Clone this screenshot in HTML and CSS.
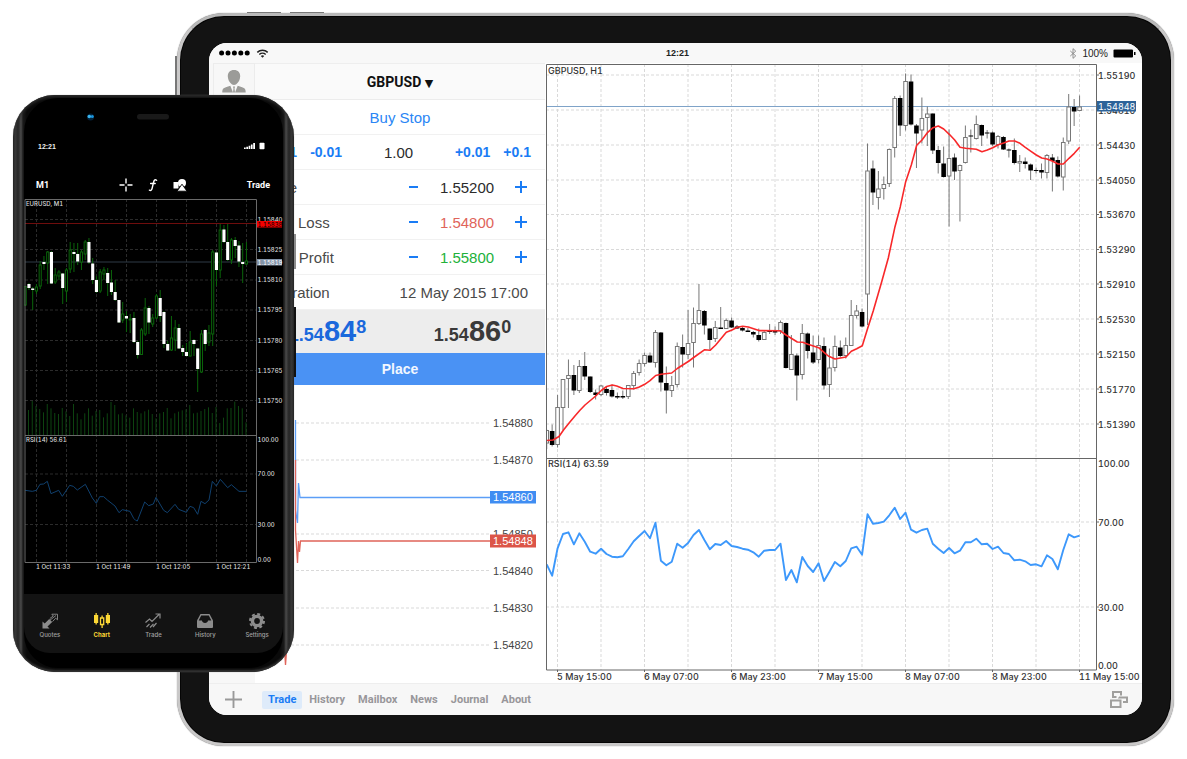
FILE: index.html
```html
<!DOCTYPE html>
<html lang="en">
<head>
<meta charset="utf-8">
<title>Trading terminal</title>
<link rel="stylesheet" href="styles.css">
</head>
<body>
<main class="stage">
  <section class="tablet">
    <i class="tablet-key tablet-key-a"></i><i class="tablet-key tablet-key-b"></i><i class="tablet-key tablet-key-side"></i>
    <div class="screen">
      <header class="status">
        <div class="status-left">
          <svg class="dots" viewBox="0 0 31 6"><circle cx="2.6" cy="3" r="2.5"/><circle cx="9" cy="3" r="2.5"/><circle cx="15.4" cy="3" r="2.5"/><circle cx="21.8" cy="3" r="2.5"/><circle cx="28.2" cy="3" r="2.5"/></svg>
          <svg class="wifi" viewBox="0 0 12 9" fill="none" stroke="#222" stroke-width="1.5"><path d="M.8 3.4a7.6 7.6 0 0 1 10.4 0M2.8 5.5a4.7 4.7 0 0 1 6.4 0"/><path d="M4.3 7a2.4 2.4 0 0 1 3.4 0L6 8.7z" fill="#222" stroke="none"/></svg>
        </div>
        <span class="clock">12:21</span>
        <div class="status-right">
          <svg class="bt" viewBox="0 0 8 12" fill="none" stroke="#888" stroke-width="1"><path d="M1 3.2l6 5.4-3 2.7V.7l3 2.7-6 5.4"/></svg>
          <span>100%</span>
          <svg class="battery" viewBox="0 0 23 9"><rect x=".5" y=".5" width="19.5" height="8" rx="1"/><rect x="21" y="3" width="1.5" height="3"/></svg>
        </div>
      </header>

      <div class="workspace">
        <div class="rail">
          <div class="avatar"><svg viewBox="0 0 24 23"><path d="M12 0c4 0 6.300 2.600 6.200 6.500-.1 2.500-1.200 5-2.700 6.600-1 1.200-2 1.900-3.500 1.900s-2.500-.7-3.500-1.900C7 11.500 5.900 9 5.800 6.500 5.700 2.600 8 0 12 0zM8.300 15.800L11 22.500H.3c0-3.300.7-4.300 3.500-5.300zM15.700 15.800L13 22.500h10.700c0-3.300-.7-4.300-3.500-5.300zM11 16.500h2l-.5 2 .5 4h-2l.5-4z"/></svg></div>
        </div>

        <form class="ticket">
          <button type="button" class="symbol">GBPUSD <span class="caret">▼</span></button>
          <div class="row row-center"><button type="button" class="link">Buy Stop</button></div>
          <div class="row row-lot">
            <button type="button" class="lot">-0.1</button><button type="button" class="lot">-0.01</button>
            <input class="value value-lot" type="text" aria-label="Volume" value="1.00">
            <button type="button" class="lot">+0.01</button><button type="button" class="lot">+0.1</button>
          </div>
          <div class="row">
            <label for="price">Price</label>
            <button type="button" class="step" aria-label="Decrease price"><svg viewBox="0 0 14 14"><path d="M3 7h9"/></svg></button>
            <input class="value" id="price" type="text" value="1.55200">
            <button type="button" class="step" aria-label="Increase price"><svg viewBox="0 0 14 14"><path d="M1 7h12M7 1v12"/></svg></button>
          </div>
          <div class="row">
            <label for="sl">Stop Loss</label>
            <button type="button" class="step" aria-label="Decrease stop loss"><svg viewBox="0 0 14 14"><path d="M3 7h9"/></svg></button>
            <input class="value value-loss" id="sl" type="text" value="1.54800">
            <button type="button" class="step" aria-label="Increase stop loss"><svg viewBox="0 0 14 14"><path d="M1 7h12M7 1v12"/></svg></button>
          </div>
          <div class="row">
            <label for="tp">Take Profit</label>
            <button type="button" class="step" aria-label="Decrease take profit"><svg viewBox="0 0 14 14"><path d="M3 7h9"/></svg></button>
            <input class="value value-profit" id="tp" type="text" value="1.55800">
            <button type="button" class="step" aria-label="Increase take profit"><svg viewBox="0 0 14 14"><path d="M1 7h12M7 1v12"/></svg></button>
          </div>
          <div class="row">
            <label for="exp">Expiration</label>
            <button type="button" class="date" id="exp">12 May 2015 17:00</button>
          </div>
          <div class="quotes">
            <div class="quote bid"><span>1.54</span><b>84</b><sup>8</sup></div>
            <div class="quote ask"><span>1.54</span><b>86</b><sup>0</sup></div>
          </div>
          <button type="button" class="place">Place</button>
          <svg class="ticks" id="ticks" viewBox="255 385 290 298" role="img" aria-label="Tick chart"></svg>
        </form>

        <svg class="chart" id="chart" viewBox="545 63 597 620" role="img" aria-label="GBPUSD H1 chart"></svg>
      </div>

      <footer class="bottom">
        <button type="button" class="add" aria-label="Add"><svg viewBox="0 0 18 18"><path d="M0 9h18M9 0v18"/></svg></button>
        <nav class="tabs">
          <button type="button" class="tab tab-on">Trade</button>
          <button type="button" class="tab">History</button>
          <button type="button" class="tab">Mailbox</button>
          <button type="button" class="tab">News</button>
          <button type="button" class="tab">Journal</button>
          <button type="button" class="tab">About</button>
        </nav>
        <button type="button" class="layout" aria-label="Layout"><svg viewBox="0 0 18 17"><path d="M6.500 6H3V1h8v3.500M9 6.500h8V11h-4M9 6.500v1M1 9.500h9.500V16H1z"/></svg></button>
      </footer>
    </div>
  </section>

  <section class="phone">
    <i class="phone-key phone-key-a"></i><i class="phone-key phone-key-b"></i>
    <div class="face">
      <svg class="sensors" viewBox="24 98 259 32"><circle cx="90.500" cy="117" r="3.500" fill="#03223a"/><circle cx="89.300" cy="116.500" r="1.800" fill="#39b4ee"/><circle cx="92.300" cy="116.500" r="1.500" fill="#1a94dc"/><rect x="137" y="114" width="32" height="5.500" rx="2.700" fill="#191919"/></svg>
      <div class="pstatus"><span>12:21</span>
        <svg viewBox="0 0 22 8" fill="#fff"><path d="M0 5.500h1.700V7H0zM2.300 4.700H4V7H2.300zM4.600 3.700h1.700V7H4.600zM6.900 2.500h1.700V7H6.900zM9.200 1h1.800v6H9.200z"/><rect x="15.500" y=".8" width="5" height="6.400" rx=".8"/></svg>
      </div>
      <div class="ptools">
        <button type="button" class="ptext">M1</button>
        <div class="picons">
          <svg viewBox="0 0 14 14" fill="none" stroke="#fff" stroke-width="1.400"><path d="M7 .5v5M7 8.500v5M.5 7h5M8.500 7h5"/></svg>
          <svg viewBox="0 0 14 14" fill="none" stroke="#fff" stroke-width="1.400" stroke-linecap="round"><path d="M10.600 2.300C8.800 1 8 2.400 7.500 4.500L6.200 10c-.5 2.200-1.400 3-2.800 2.200M4.600 5.500h4.600"/></svg>
          <svg viewBox="0 0 14 14" fill="#fff"><path d="M.5 4h5v6.500h-5z"/><circle cx="9" cy="5" r="4"/><path d="M9 6.200l5 7H4z" stroke="#000" stroke-width=".9"/></svg>
        </div>
        <button type="button" class="ptext ptext-right">Trade</button>
      </div>
      <svg class="pchart" id="pchart" viewBox="24 198 259 396" role="img" aria-label="EURUSD M1 chart"></svg>
      <nav class="ptabs">
        <button type="button" class="ptab"><svg viewBox="0 0 16 16"><path d="M.5 15.500V8.500l2.200 2L7.200 6l3 3-4.700 4.500 2 2z" fill="#8c8c8c"/><path d="M7.800 5.500L11.300 3 9.800 1.200h5.700v5.600l-1.800-1.600-3.200 3.400M7.500 7.500L14 2.500" fill="none" stroke="#8c8c8c" stroke-width=".9"/></svg>Quotes</button>
        <button type="button" class="ptab ptab-on"><svg viewBox="0 0 16 16" fill="#fdd835"><path d="M0 2h1.500V0h1.300v2h1.400v8H2.800v1.500H1.500V10H0zM11.800 2h1.400V0h1.300v2H16v8h-1.500v1.500h-1.300V10h-1.400z"/><path d="M6.500 5h3.200v6.500H6.500zM8.100 2.500V5M8.100 11.500V15" fill="none" stroke="#fdd835" stroke-width="1.300"/></svg>Chart</button>
        <button type="button" class="ptab"><svg viewBox="0 0 16 16" fill="none" stroke="#8c8c8c" stroke-width="1.200"><path d="M.5 9.500l4-3.500 2.500 2.500 7-7M10.500 1h4.500v4.500M1.500 14l3-3M5 14.500l3.500-3.500M8 14l3.500-4"/></svg>Trade</button>
        <button type="button" class="ptab"><svg viewBox="0 0 16 16"><path d="M3.500 1h9L16 7.500V14a1 1 0 0 1-1 1H1a1 1 0 0 1-1-1V7.500z" fill="#8c8c8c"/><path d="M4.200 2.600h7.600l2.500 5H11c0 3.300-6 3.300-6 0H1.700z" fill="#131313"/></svg>History</button>
        <button type="button" class="ptab"><svg viewBox="0 0 16 16"><circle cx="8" cy="8" r="4.600" fill="none" stroke="#8c8c8c" stroke-width="3.400"/><circle cx="8" cy="8" r="7" fill="none" stroke="#8c8c8c" stroke-width="2" stroke-dasharray="3 2.500"/></svg>Settings</button>
      </nav>
    </div>
  </section>
</main>
<script src="charts.js"></script>
</body>
</html>
```

FILE: styles.css
```css
* { box-sizing: border-box; }
body { margin: 0; background: #fff; font-family: "Liberation Sans", Arial, sans-serif; color: #222; }
button, input { font: inherit; color: inherit; background: none; border: 0; padding: 0; margin: 0; }
button { cursor: pointer; }
svg { display: block; }

.stage { position: relative; padding: 13px 13px 13px 177px; min-width: 900px; }

.tablet {
  position: relative;
  padding: 27px 29px 28px;
  border: 3px solid #c9c8c8;
  border-top-color: #b9b9b9;
  border-radius: 47px;
  background: #131313;
  box-shadow: inset 0 0 0 1px #050505, 0 0 1px #666;
}
.tablet-key { position: absolute; height: 1px; width: 34px; top: -4px; background: #777; }
.tablet-key-a { left: 67px; }
.tablet-key-b { left: 110px; }
.tablet-key-side { width: 2px; height: 40px; left: -5px; top: 40px; }

.screen { border-radius: 18px; overflow: hidden; background: #fff; display: flex; flex-direction: column; }
.status {
  display: grid; grid-template-columns: 1fr auto 1fr; align-items: center;
  height: 20px; padding: 0 6px 0 10px; background: #f8f8f8; font-size: 10px; color: #222;
}
.status-left { display: flex; align-items: center; gap: 6px; }
.status-right { display: flex; align-items: center; justify-content: flex-end; gap: 5px; font-size: 10px; }
.clock { font-size: 9px; font-weight: bold; }
.dots { width: 31px; height: 6px; }
.wifi { width: 13px; height: 9px; }
.bt { width: 8px; height: 11px; }
.battery { width: 23px; height: 9px; }

.workspace { display: grid; grid-template-columns: 46px 290px 1fr; }
.rail { background: #f7f7f7; padding-left: 4px; }
.avatar { height: 37px; border: 1px solid #ececec; border-width: 1px 1px 0; display: flex; justify-content: center; padding-top: 6px; }
.avatar svg { width: 24px; height: 23px; fill: #9b9b98; }

.ticket { display: flex; flex-direction: column; font-size: 15px; color: #4a4a4a; }
.symbol {
  height: 37px; background: #fafafa; border-top: 1px solid #eee; border-bottom: 1px solid #ececec;
  font-family: "Roboto", sans-serif; font-weight: bold; font-size: 14px; color: #111;
}
.caret { font-family: "DejaVu Sans", sans-serif; font-size: 11px; }
.row { display: flex; align-items: center; gap: 2px; height: 35px; padding: 0 17px 0 8px; border-bottom: 1px solid #f1f1f1; }
.row label { flex: 1; }
.row-center { justify-content: center; padding: 0; }
.row-lot { gap: 13px; padding: 0 14px 0 18px; }
.link { color: #2a86f5; }
.lot { color: #1a7cf5; font-weight: bold; font-size: 14px; }
.value { width: 90px; text-align: center; color: #2b2b2b; outline: 0; }
.value-lot { width: auto; min-width: 0; flex: 1; }
.value-loss { color: #e0645a; }
.value-profit { color: #22b13a; }
.step svg { width: 14px; height: 14px; fill: none; stroke: #1a7cf5; stroke-width: 2; }
.quotes { display: flex; height: 43px; background: #ededed; }
.quote { flex: 1; display: flex; justify-content: center; align-items: baseline; font-weight: bold; font-size: 18px; line-height: 42px; }
.quote b { font-size: 29px; }
.quote sup { font-size: 18px; line-height: 20px; align-self: flex-start; margin-top: 7px; vertical-align: baseline; }
.bid { color: #1a68dc; }
.ask { color: #3a3a3a; }
.place { height: 32px; background: #4a92f4; color: #f2f7ff; font-size: 14px; font-weight: bold; }
.ticks { width: 100%; font-size: 11px; }
.chart { width: 100%; height: auto; font-family: "Inter", sans-serif; font-size: 9px; font-variant-numeric: tabular-nums; }

.bottom { display: flex; align-items: center; height: 32px; background: #f7f7f7; border-top: 1px solid #eee; padding-right: 14px; }
.add { width: 49px; display: flex; justify-content: center; }
.add svg { width: 17px; height: 17px; fill: none; stroke: #999; stroke-width: 2; }
.tabs { flex: 1; display: flex; gap: 1px; padding-left: 4px; }
.tab { height: 18px; padding: 0 6px; border-radius: 2px; font-family: "Roboto", sans-serif; font-weight: bold; font-size: 11px; color: #98969a; }
.tab-on { background: #deebfa; color: #1a7cf5; }
.layout svg { width: 18px; height: 17px; fill: none; stroke: #a09f9d; stroke-width: 2; }

.phone {
  position: absolute; left: 13px; top: 95px; width: 281px; padding: 3px 11px 4px;
  border-radius: 42px;
  background: linear-gradient(90deg, #1c1c1c 0, #3a3a3a 2px, #262626 5px, #303030 6px, #4a4a4a 8px, #1a1a1a 10px, #0a0a0a 14px, #0a0a0a 267px, #1a1a1a 271px, #4a4a4a 273px, #303030 275px, #262626 276px, #3a3a3a 279px, #1c1c1c 281px);
  box-shadow: inset 0 2px 3px #2c2c2c, inset 0 -2px 2px #333, 0 0 1px #888;
}
.phone-key { position: absolute; width: 2px; right: -2px; }
.phone-key-a { top: 139px; height: 35px; background: #8c8c8c; }
.phone-key-b { top: 212px; height: 70px; background: #111; }
.face { display: flex; flex-direction: column; background: #000; border-radius: 34px; padding-bottom: 15px; overflow: hidden; }
.sensors { width: 100%; }
.pstatus { height: 32px; padding: 0 17px 0 14px; display: flex; align-items: center; justify-content: space-between; color: #eee; font-size: 7px; font-weight: bold; }
.pstatus svg { width: 22px; height: 8px; }
.ptools { margin-top: 10px; height: 26px; padding: 0 13px 0 12px; display: grid; grid-template-columns: 1fr auto 1fr; align-items: center; }
.picons { display: flex; gap: 13px; }
.picons svg { width: 14px; height: 14px; }
.ptext { color: #fff; text-align: left; font-family: "Roboto", sans-serif; font-weight: bold; font-size: 9px; }
.ptext-right { text-align: right; }
.pchart { width: 100%; height: auto; font-family: "Inter", sans-serif; font-size: 6px; font-variant-numeric: tabular-nums; }
.ptabs { display: grid; grid-template-columns: repeat(5, 1fr); height: 59px; padding-top: 19px; background: #131313; border-radius: 0 0 26px 26px; }
.ptab { display: flex; flex-direction: column; align-items: center; gap: 2px; align-self: start; color: #a2a2a2; font-family: "Inter", sans-serif; font-size: 6px; font-weight: 500; line-height: 8px; }
.ptab svg { width: 16px; height: 16px; }
.ptab-on { color: #fdd835; font-weight: bold; }

.grid { stroke: #d9d9d9; stroke-dasharray: 3 2; fill: none; }
.frame { stroke: #666; fill: none; }
.wick { stroke: #777; fill: none; }
.up { stroke: #777; fill: #fff; }
.down { fill: #000; }
.average { stroke: #f8282a; stroke-width: 1.600; fill: none; stroke-linejoin: round; }
.rsi { stroke: #3d98fb; stroke-width: 1.900; fill: none; stroke-linejoin: round; }
.axis, .title { fill: #333; font-weight: 500; }
.tag { fill: #fff; }
.ticks .axis { font-weight: 400; fill: #444; }
.pchart .grid { stroke: #2b2b2b; }
.pchart .frame { stroke: #6a6a6a; }
.pchart .wick { stroke: #0a640a; }
.pchart .up { stroke: #0a640a; fill: #000; }
.pchart .down { fill: #fff; }
.pchart .rsi { stroke: #10406e; stroke-width: 3px; }
.pchart .axis { fill: #dcdcdc; }
.volume { stroke: #0d4410; fill: none; }
```

FILE: charts.js
```js
// Small SVG helpers shared by the three charts.
const line = (c, d) => `<path class="${c}" d="${d}"/>`;
const text = (c, x, y, s) => `<text class="${c}" x="${x}" y="${y}">${s}</text>`;
const rect = (x, y, w, h, f) => `<rect x="${x}" y="${y}" width="${w}" height="${h}" fill="${f}"/>`;

// Each candle: high, body top, body bottom, low, falling flag.
function candles(data, x0, step, w) {
  let out = "";
  data.forEach(([h, t, b, l, down], i) => {
    const x = x0 + i * step;
    out += line("wick", `M${x} ${h}V${l}`);
    const hgt = Math.max(b - t, 1);
    out += down
      ? `<rect class="down" x="${x - w / 2 - .3}" y="${t}" width="${w + .6}" height="${hgt}"/>`
      : `<rect class="up" x="${x - w / 2 + .2}" y="${t}" width="${w - .4}" height="${hgt}"/>`;
  });
  return out;
}
const vertical = (x0, step, n, top, bottom) => {
  let d = "";
  for (let i = 0; i < n; i++) d += `M${x0 + i * step} ${top}V${bottom}`;
  return d;
};

// GBPUSD, H1
const h1 = [
[429.5,430.5,443,449,0],[424.5,431,445,446.5,1],[395,407.5,444.5,447.5,0],[379,379.5,407.5,430,0],[359.5,375.5,378.5,408,0],[365,375,390.5,395,1],[360,366.5,390.5,393,0],[352,366,376.5,380,1],[376.5,376.5,392,393,1],[389.5,392.5,395,399.5,1],
[385,386,394.5,396,0],[387,389,393,395.5,1],[384.5,390,396.5,397.5,1],[392.5,396,397.5,399,1],[390.5,396,397.5,399,1],[385,385.5,396.5,399,0],[371,373.5,385.5,389.5,0],[359.5,363.5,372.5,375.5,0],[352.5,355.5,363.5,366.5,0],[352.5,355.5,362.5,363,1],
[330,332.5,362.5,367.5,0],[332,332.5,382.5,391.5,1],[366.5,383,390.5,413.5,1],[376,385.5,390.5,397,0],[342.5,346.5,384.5,387.5,0],[334.5,347,354.5,367.5,1],[310,343.5,354.5,359,0],[307.5,323.5,342.5,367.5,0],[284,310.5,323.5,325,0],[310,311,325.5,334.5,1],
[328.5,328.5,340,349.5,1],[321,327.5,338.5,342,0],[307,327.5,329,329,1],[318.5,320.5,328.5,329,0],[317.5,320.5,327.5,328,1],[325,326.5,328.5,329,1],[327,328,330.5,331.5,1],[328,330.5,332,332,1],[331,332,334.5,337.5,1],[328.5,335,340,341.5,1],
[330,332.5,339.5,340,0],[324,330.5,332,334,1],[326.5,331,332.5,335,1],[320.5,322.5,331,334,0],[322.5,323,368,368.5,1],[335,354.5,369.5,370,0],[353.5,355.5,375.5,400.5,1],[324,333.5,374.5,379.5,0],[332.5,333.5,351,358.5,1],[335.5,352.5,362.5,364,1],
[335.5,345.5,359.5,363.5,0],[337.5,346,385.5,389.5,1],[348.5,368,384.5,397,0],[335.5,346.5,367.5,371.5,0],[340.5,347.5,356,357.5,1],[337.5,345.5,355.5,358.5,0],[300,315.5,345.5,346,0],[305,311,315.5,318.5,0],[308.5,312,326.5,327.5,1],[143.5,171,294,325,0],
[160.5,168.5,192.5,205,1],[171,189,197.5,209.5,0],[176.5,184.5,188.5,199.5,0],[148.5,149.5,183.5,187,0],[96,98.5,147.5,157.5,0],[95.5,98,125.5,136,1],[73.5,81.5,125.5,130.5,0],[74.5,81.5,124.5,125.5,1],[124,125.5,133.5,168,1],[97.5,118.5,130,143.5,0],
[106.5,114,117.5,146,0],[113.5,113.5,150.5,154,1],[146,150,163,173.5,1],[146.5,163.5,177,177.5,1],[129.5,158.5,176,226.5,0],[153.5,157.5,171.5,180,1],[164.5,165.5,170.5,221.5,0],[125.5,137.5,162.5,163.5,0],[129.5,135.5,136.5,152.5,1],[115.5,124.5,138.5,139.5,0],
[124.5,125,135.5,146,1],[130,132.5,133.5,138.5,1],[131.5,132.5,144.5,146,1],[135,136.5,144.5,148.5,0],[136,137,149.5,150,1],[148.5,149.5,150.5,157.5,1],[138.5,150,163,164.5,1],[155,161.5,163,172,0],[157.5,161.5,164,168.5,1],[163.5,164.5,170.5,180,1],
[167.5,170,171,173.5,1],[163.5,170,172.5,178.5,1],[154,155.5,172.5,178.5,0],[154,157.5,161,191.5,1],[156.5,160,176.5,177.5,1],[137.5,142.5,177,190.5,0],[94,107,141,144,0],[99,107,111.5,126,1],[95.5,107,110.5,111,0]];
const average = "546.7,440.5 553,440 559,436.5 563.5,430 568.7,423.5 574.5,416.5 579.7,410.5 585,405 595.7,396 601.3,390.5 606.7,386.5 612.3,385 616.7,386 623,388.5 634,388.7 639.3,387 644.7,384.3 650,380.7 655.7,375.5 661,374.3 671.7,373 677.3,368.5 682.7,365 688.3,361.5 693.7,357.5 704.7,349.7 710,350.3 715.7,345 726.3,332.3 732,330 737.3,327.3 742.7,326.3 748.3,327 759,330.6 780,330.7 786,335 797.3,342 802.7,342.3 808,344.3 818.7,347.7 824.3,352.7 828.3,356 835,359 846,357 851.3,351.3 856.7,348.7 862.3,345.7 867.7,328.3 873.3,310.7 881.7,281.7 888.3,258 895,226.7 900.3,206.7 905.7,181.7 911.3,165 916.7,145.3 922,140 927.7,132.3 933,127.7 938.3,126 943.7,129 949.3,134.3 954.7,140 960,147.3 965.7,148.3 976.3,149.3 982,151.7 987.3,150 992.7,147.7 998.3,144.7 1003.7,143 1009,141 1014.7,141 1020,143.3 1025.3,147.3 1031,151.3 1036.3,155 1041.7,158 1047,159 1052.7,161.3 1058,164 1063.3,164 1069,158.3 1074.3,153.3 1079.7,147.3";
const rsiH1 = [564.3,575.7,548.3,534,532.3,544.3,533.3,541.7,551.7,553.7,548.7,554,556.7,557.3,556.3,549,541.3,536,531,538.3,522.7,560.7,565.3,561.7,543.7,547.7,543,535,530,540,549.3,544,545,541,546,547,548.7,549.7,552.3,556.7,550.7,550,550,543.7,580,570,582.3,557,566,572,563.3,581,571.7,562,566.3,561,548.3,546.7,554.7,514.3,523.7,523,521.7,515.3,507.7,519,512.7,529.7,532.7,530,528.7,543.7,548.7,553,548,553.3,550.7,542.3,542.3,538.7,544.3,543.7,549,546.7,553,554,560.3,559.7,561.3,565,564.3,566.3,555.3,559,569.3,550,534.3,537.3,535.7];

function drawH1() {
  const x0 = 546.7, step = 5.4375;
  const rows = [75,110,145,180,214.5,249.5,284,319,354,389,424];
  const prices = ["1.55190","1.54810","1.54430","1.54050","1.53670","1.53290","1.52910","1.52530","1.52150","1.51770","1.51390"];
  let s = line("grid", vertical(557.5, 43.5, 13, 64, 670) + [...rows, 522, 607].map(y => `M546 ${y}H1096`).join(""));
  s += rect(546, 106, 551, 1, "#7fa3c8");
  s += candles(h1, x0, step, 4);
  s += `<polyline class="average" points="${average}"/>`;
  s += `<polyline class="rsi" points="${rsiH1.map((y, i) => `${x0 + i * step},${y}`).join(" ")}"/>`;
  s += rect(544, 64, 2, 606, "#fff");
  s += line("frame", "M546.5 64.500H1096.500V670H546.500zM546.500 458.500H1096.500");
  s += line("frame", rows.concat(522, 607).map(y => `M1096 ${y}h3`).join("") + vertical(557.5, 87, 7, 670, 672));
  rows.forEach((y, i) => s += text("axis", 1098, y + 3.5, prices[i]));
  s += rect(1097, 101, 39, 10.500, "#2d6399") + text("tag", 1098, 109.500, "1.54848");
  s += text("axis", 1098, 467, "100.00") + text("axis", 1098, 525.500, "70.00") + text("axis", 1098, 610.500, "30.00") + text("axis", 1098, 669, "0.00");
  ["5 May 15:00","6 May 07:00","6 May 23:00","7 May 15:00","8 May 07:00","8 May 23:00","11 May 15:00"].forEach((t, i) => s += text("axis", 557 + i * 87, 679.5, t));
  s += text("title", 548, 74, "GBPUSD, H1") + text("title", 548, 467, "RSI(14) 63.59");
  document.getElementById("chart").innerHTML = s;
}

function drawTicks() {
  const rows = [[423,"1.54880"],[460,"1.54870"],[534,"1.54850"],[570.5,"1.54840"],[608,"1.54830"],[645,"1.54820"]];
  let s = line("grid", rows.map(([y]) => `M256 ${y}H489`).join(""));
  rows.forEach(([y, t]) => s += text("axis", 493, y + 4, t));
  s += `<path d="M295.500 420V510L297.500 523 298.500 483 300 497.500H490" fill="none" stroke="#5c9ef7" stroke-width="1.300"/>`;
  s += `<path d="M284 640L285.500 665 287 645M295.500 460V530L297.500 563 298.500 541 299.500 552 300.500 541H490" fill="none" stroke="#e0645a" stroke-width="1.300"/>`;
  s += rect(490, 491, 46, 12.500, "#3f8df2") + text("tag", 493, 501, "1.54860");
  s += rect(490, 534.500, 46, 13, "#dc5548") + text("tag", 493, 545, "1.54848");
  document.getElementById("ticks").innerHTML = s;
}

// EURUSD, M1
const m1 = [
[286,286.5,305,306,0],[283,284,288,290,1],[287,288.5,290,310,1],[284,287,291,294,0],[261,265,286,289,0],[256,262,264,270,1],[251,252,263,284,0],[251,252,283.5,284,1],[268,275,282,284,0],[270,272,276,280,0],
[273,273.5,288,304,1],[268,270,291,302,0],[242,250,269,273,0],[243,252,254,272,1],[243,254,261.5,265,1],[250,252,262,270,0],[240,242,254,260,0],[238,242,262.5,264,1],[258,263.5,280,284,1],[276,280,292,293,1],
[269,272,291,293,0],[267,270,274,280,0],[268,273,283,296,1],[270,282.5,292,295,1],[280,292,300,301,1],[300,300,322.5,323,1],[302,314,320,323,0],[311,316,318.5,332,1],[314,319,320,333,0],[312,318,342,343,1],
[341,342,355,358.5,1],[328,330,354.5,355,0],[298,308,334,336,0],[306,308,322.5,334,1],[314,318,324,327,0],[294,296,318,319,0],[290,298,316,322,1],[311,312,344,348,1],[341,344,350.5,351,1],[316,338,350,351,0],
[320,328,340,351,0],[324,328,348.5,349,1],[345,348,352,356,1],[343,352,356,356.5,1],[331,342,356,356.5,0],[339,340,344,356,1],[348,348.5,369,392,1],[330,334,372,373,0],[329,330,344,351,1],[325,333,342,346,0],
[250,252,334,346,0],[252,252.5,270,286,1],[224,230,270,278,0],[225,229.5,242,243,1],[224,242,260,261,1],[238,240,260,264,0],[237,240,246,258,1],[241,245.5,261.5,267,1],[243,262,264,283,1],[242,261,264,265,0]];
const volume = [420,393,408,417,427,402,415,429,432,414,424,438,402,430,448,430,415,437,423,420,442,430,396,405,433,430,436,443,415,426,430,424,419,432,445,430,426,414,445,430,425,421,418,405,430,428,423,417,412,429,411,459,443,415,414,395,408,415,457];
const rsiM1 = "75,121 97,124 109,121 120,103 131,102 142,94 153,131 176,121 187,139 209,106 220,109 232,120 256,103 277,144 289,160 299,140 311,140 322,150 345,168 357,188 367,179 390,184 401,205 407,211 412,213 434,156 446,167 460,162 468,142 491,181 502,188 525,163 536,178 559,187 570,169 581,173 593,193 603,154 615,161 627,150 637,94 649,108 661,88 683,113 694,104 717,124 739,124";

function drawM1() {
  const rows = [[219.5,"1.15840"],[249.5,"1.15825"],[280,"1.15810"],[310,"1.15795"],[340.5,"1.15780"],[370.5,"1.15765"],[400.5,"1.15750"]];
  let s = line("grid", vertical(36.5, 30, 8, 199, 562) + rows.map(r => r[0]).concat(474, 524.5).map(y => `M25 ${y}H256`).join(""));
  s += line("volume", volume.map((v, i) => `M${28.5 + i * 3.75} 436V${270 + v / 3}`).join(""));
  s += rect(25, 223, 232, 1, "#6e0d0d") + rect(25, 261.500, 232, 1, "#2f3a46");
  s += candles(m1, 25.2, 3.75, 2.5);
  s += `<g transform="translate(0 450) scale(.33333)"><polyline class="rsi" points="${rsiM1}"/></g>`;
  s += line("frame", "M25 199.500H256.500V562.500H25zM25 435.500H256.500");
  rows.forEach(([y, t]) => s += text("axis", 257.5, y + 2, t));
  s += rect(257, 221, 25, 6.500, "#f40000") + text("onred", 257.5, 226.500, "1.15838");
  s += rect(257, 259, 25, 6.500, "#8394a8") + text("tag", 257.5, 264.500, "1.15819");
  s += text("axis", 257.5, 441.5, "100.00") + text("axis", 257.5, 476, "70.00") + text("axis", 257.5, 527, "30.00") + text("axis", 257.5, 561.5, "0.00");
  ["1 Oct 11:33","1 Oct 11:49","1 Oct 12:05","1 Oct 12:21"].forEach((t, i) => s += text("axis", 36 + i * 60, 569, t));
  s += text("axis", 26, 206, "EURUSD, M1") + text("axis", 26, 441.5, "RSI(14) 56.61");
  document.getElementById("pchart").innerHTML = s;
}

drawH1();
drawTicks();
drawM1();
```
